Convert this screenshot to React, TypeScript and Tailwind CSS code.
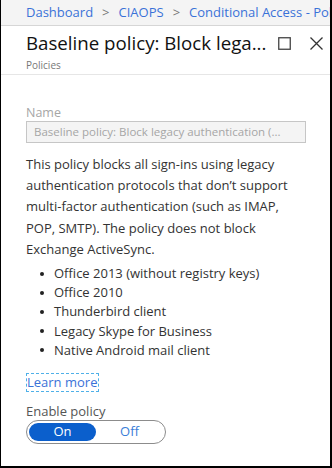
const bullets = [
  "Office 2013 (without registry keys)",
  "Office 2010",
  "Thunderbird client",
  "Legacy Skype for Business",
  "Native Android mail client",
];

export default function App() {
  return (
    <div
      className="w-[332px] h-[468px] bg-white border-l border-r-2 border-b-2 border-black overflow-hidden flex flex-col"
      style={{ fontFamily: '"Open Sans", "Noto Sans", sans-serif' }}
    >
      <div className="h-[26px] shrink-0 bg-[#f4f4f4] border-b border-[#d6d6d6] flex items-center pl-[25px] text-[13px] text-[#3a72d8] whitespace-nowrap overflow-hidden gap-[9px]">
        <span>Dashboard</span>
        <span className="text-[#777]">&gt;</span>
        <span>CIAOPS</span>
        <span className="text-[#777]">&gt;</span>
        <span>Conditional Access - Policies</span>
      </div>

      <div className="h-[49px] shrink-0 border-b border-[#e6e6e6] pl-[25px] pt-[3px]">
        <div className="flex items-center">
          <h1 className="w-[252px] text-[18.7px] text-[#111] leading-[28px] whitespace-nowrap">
            Baseline policy: Block lega...
          </h1>
          <svg width="13" height="13" viewBox="0 0 13 13">
            <rect x="0.75" y="0.75" width="11.5" height="11.5" fill="none" stroke="#444" strokeWidth="1.3" />
          </svg>
          <svg width="13" height="13" viewBox="0 0 13 13" className="ml-[19px]">
            <path d="M0.5 0.5L12.5 12.5M12.5 0.5L0.5 12.5" stroke="#333" strokeWidth="1.3" />
          </svg>
        </div>
        <div className="text-[10px] text-[#777] leading-[12px] mt-[2px]">Policies</div>
      </div>

      <div className="pl-[25px] pr-[24px] pt-[29px]">
        <div className="text-[12.5px] text-[#a6a6a6] leading-[17px]">Name</div>
        <div className="h-[22px] border border-[#c6c6c6] bg-[#f4f4f4] flex items-center px-[7px] text-[11.5px] text-[#a6a6a6] whitespace-nowrap overflow-hidden">
          Baseline policy: Block legacy authentication (...
        </div>

        <p className="mt-[11px] text-[13px] leading-[21.2px] text-[#333]">
          This policy blocks all sign-ins using legacy authentication protocols that don’t support
          multi-factor authentication (such as IMAP, POP, SMTP). The policy does not block
          Exchange ActiveSync.
        </p>

        <ul className="mt-[4px] pl-[14px] text-[13px] leading-[19.2px] text-[#333]">
          {bullets.map((b) => (
            <li key={b} className="flex items-center gap-[10px]">
              <span className="w-[4px] h-[4px] rounded-full bg-[#222] shrink-0" />
              {b}
            </li>
          ))}
        </ul>

        <div className="mt-[9px]">
          <span className="inline-block border border-dashed border-[#4fb0e8] text-[13px] leading-[17px] text-[#3a72d8] pr-[1px]">
            Learn more
          </span>
        </div>

        <div className="mt-[10px] text-[13px] leading-[16px] text-[#555]">Enable policy</div>
        <div className="mt-[1px] w-[140px] h-[24px] rounded-full border-[1.5px] border-[#8c8c8c] flex items-center p-[2px] text-[13px]">
          <div className="w-[67px] h-full rounded-full bg-[#0b5fcc] text-white flex items-center justify-center">
            On
          </div>
          <div className="flex-1 text-center text-[#3a7dd8]">Off</div>
        </div>
      </div>
    </div>
  );
}
